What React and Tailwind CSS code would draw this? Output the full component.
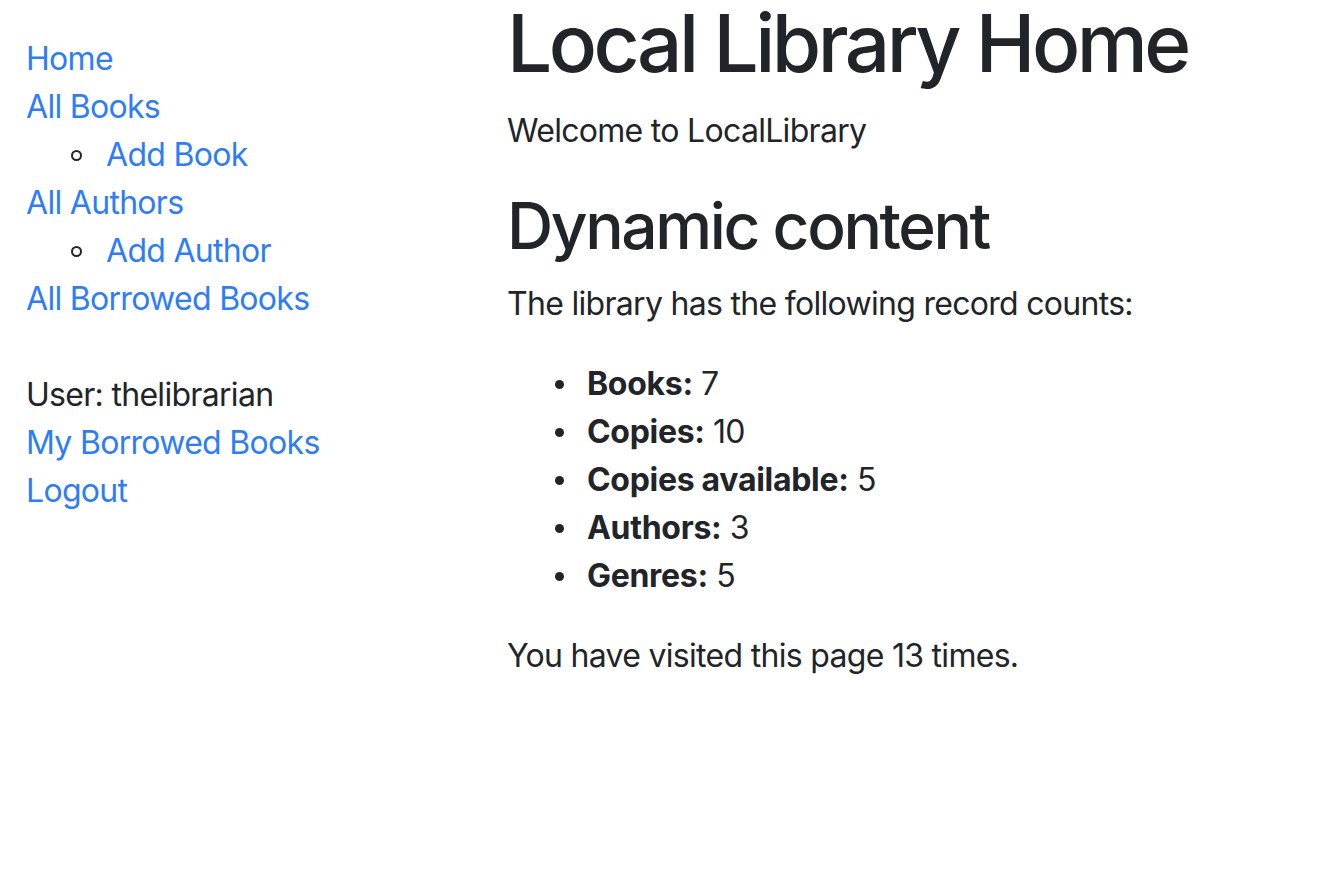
const stats = [
  ["Books:", "7"],
  ["Copies:", "10"],
  ["Copies available:", "5"],
  ["Authors:", "3"],
  ["Genres:", "5"],
];

function SubItem({ children }) {
  return (
    <ul className="list-none pl-[45px]">
      <li className="flex items-center">
        <span className="w-[35px] shrink-0">
          <span className="block size-[11px] rounded-full border-[2px] border-[#212529]" />
        </span>
        <a className="text-[#2f7df6]">{children}</a>
      </li>
    </ul>
  );
}

function Sidebar() {
  const link = "text-[#2f7df6]";
  return (
    <div className="w-[507px] shrink-0 pl-[26px] pt-[35px]">
      <ul className="list-none">
        <li><a className={link}>Home</a></li>
        <li><a className={link}>All Books</a></li>
        <SubItem>Add Book</SubItem>
        <li><a className={link}>All Authors</a></li>
        <SubItem>Add Author</SubItem>
        <li><a className={link}>All Borrowed Books</a></li>
        <li className="mt-[48px]">User: thelibrarian</li>
        <li><a className={link}>My Borrowed Books</a></li>
        <li><a className={link}>Logout</a></li>
      </ul>
    </div>
  );
}

export default function App() {
  return (
    <div
      className="flex min-h-[878px] bg-white text-[32px] leading-[48px] tracking-[-0.7px] text-[#212529]"
      style={{ fontFamily: "Inter, 'Noto Sans', sans-serif" }}
    >
      <Sidebar />
      <div className="flex-1">
        <h1 className="mb-[21px] text-[80px] leading-[86px] font-medium tracking-[-3.5px]">
          Local Library Home
        </h1>
        <p className="mb-[32px]">Welcome to LocalLibrary</p>
        <h2 className="mb-[16px] text-[64px] leading-[77px] font-medium tracking-[-2.4px]">
          Dynamic content
        </h2>
        <p className="mb-[32px]">The library has the following record counts:</p>
        <ul className="mb-[32px] list-none pl-[48px]">
          {stats.map(([label, value]) => (
            <li key={label} className="flex items-center">
              <span className="w-[32px] shrink-0">
                <span className="block size-[9px] rounded-full bg-[#212529]" />
              </span>
              <span>
                <strong className="font-bold tracking-[-0.3px]">{label}</strong> {value}
              </span>
            </li>
          ))}
        </ul>
        <p>You have visited this page 13 times.</p>
      </div>
    </div>
  );
}
